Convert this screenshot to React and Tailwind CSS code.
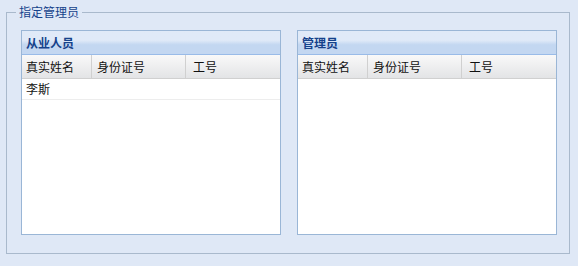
import React from "react";

const font = { fontFamily: '"Noto Sans CJK SC", "Liberation Sans", sans-serif' };

const GridPanel = ({ title, rows }) => {
  return (
    <div className="w-[260px] h-[205px] border border-[#9ab6d6] bg-white flex flex-col">
      <div className="h-[24px] shrink-0 border-b border-[#99bbe8] bg-gradient-to-b from-[#e0eaf8] from-40% to-[#c3d7f1] to-60% pl-[4px] flex items-center text-[12px] font-bold text-[#15428b]">
        {title}
      </div>
      <div className="h-[24px] shrink-0 flex border-b border-[#d0d0d0] bg-gradient-to-b from-[#f9f9f9] to-[#e3e4e6] text-[12px] text-[#111]">
        <div className="w-[70px] border-r border-[#d0d0d0] pl-[4px] flex items-center">真实姓名</div>
        <div className="w-[94px] border-r border-[#d0d0d0] pl-[5px] flex items-center">身份证号</div>
        <div className="flex-1 pl-[7px] flex items-center">工号</div>
      </div>
      <div className="flex-1">
        {rows.map((row, i) => (
          <div key={i} className="h-[21px] flex border-b border-[#ededed] text-[12px] text-[#111]">
            <div className="w-[70px] pl-[4px] flex items-center">{row.name}</div>
            <div className="w-[94px] pl-[5px] flex items-center">{row.idcard}</div>
            <div className="flex-1 pl-[7px] flex items-center">{row.no}</div>
          </div>
        ))}
      </div>
    </div>
  );
};

export default function App() {
  const staff = [{ name: "李斯", idcard: "", no: "" }];
  return (
    <div className="w-[578px] h-[266px] bg-[#dfe8f6] pt-[5px] pl-[6px]" style={font}>
      <fieldset className="w-[564px] h-[249px] border border-[#a9b9cc] p-0 m-0">
        <legend className="ml-[9px] px-[3px] text-[12px] leading-[14px] text-[#15428b]">指定管理员</legend>
        <div className="flex gap-[16px] pt-[11px] pl-[14px] pr-[12px]">
          <GridPanel title="从业人员" rows={staff} />
          <GridPanel title="管理员" rows={[]} />
        </div>
      </fieldset>
    </div>
  );
}
